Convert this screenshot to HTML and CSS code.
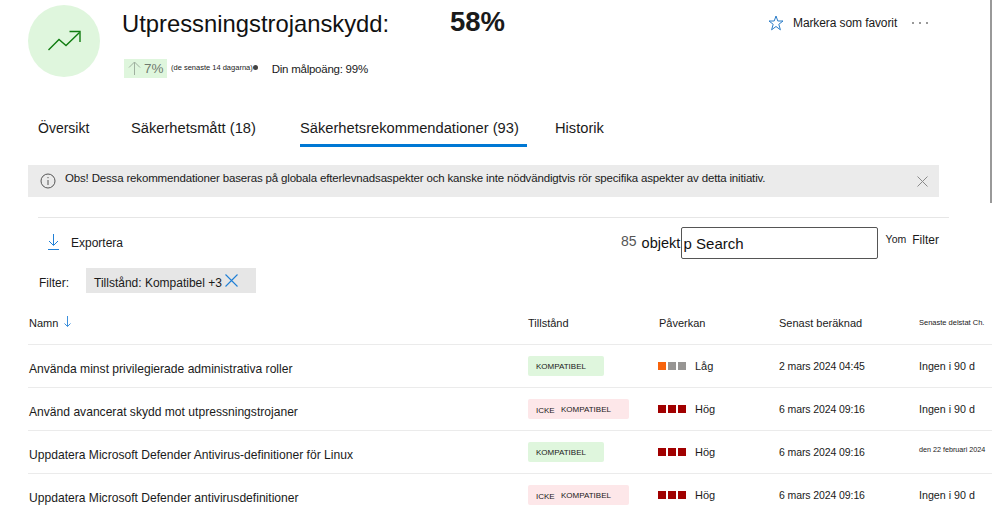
FILE: index.html
```html
<!DOCTYPE html>
<html lang="sv">
<head>
<meta charset="utf-8">
<title>Utpressningstrojanskydd</title>
<link rel="stylesheet" href="styles.css">
</head>
<body>
<div class="scrollbar"></div>
<header class="head">
  <div class="circle">
    <svg width="36" height="24" viewBox="0 0 36 24" fill="none" stroke="#107c10" stroke-width="1.4"><path d="M2.5 21 L13 10.500 L20 16.500 L33.500 3.500"/><path d="M23.500 2.500 H34 V13"/></svg>
  </div>
  <div class="head-main">
    <div class="title-row">
      <h1 class="title">Utpressningstrojanskydd:</h1>
      <div class="score">58%</div>
    </div>
    <div class="sub-row">
      <span class="delta"><svg width="13" height="14" viewBox="0 0 13 14" fill="none" stroke="#9fb09f" stroke-width="1"><path d="M6.500 14 V1 M1 6.500 L6.500 1 L12 6.500"/></svg>7%</span>
      <span class="period">(de senaste 14 dagarna)</span><span class="dot"></span>
      <span class="goal">Din målpoäng: 99%</span>
    </div>
  </div>
  <div class="fav">
    <svg width="16" height="16" viewBox="0 0 16 16" fill="none" stroke="#2b7cc7" stroke-width="1"><path d="M8 1 L9.800 6 H15 L10.800 9.300 L12.400 14.800 L8 11.500 L3.600 14.800 L5.200 9.300 L1 6 H6.200 Z"/></svg>
    <span class="fav-label">Markera som favorit</span>
    <span class="more"><i></i><i></i><i></i></span>
  </div>
</header>

<nav class="tabs">
  <a class="tab t1">Översikt</a>
  <a class="tab t2">Säkerhetsmått (18)</a>
  <a class="tab t3 active">Säkerhetsrekommendationer (93)</a>
  <a class="tab t4">Historik</a>
</nav>

<div class="info">
  <svg class="info-icon" width="16" height="16" viewBox="0 0 16 16" fill="none" stroke="#555"><circle cx="8" cy="8" r="7"/><path d="M8 7 V12 M8 4 V5.200"/></svg>
  <span class="info-text">Obs! Dessa rekommendationer baseras på globala efterlevnadsaspekter och kanske inte nödvändigtvis rör specifika aspekter av detta initiativ.</span>
  <svg class="info-close" width="11" height="11" viewBox="0 0 11 11" stroke="#8a8a8a" stroke-width="1"><path d="M0.500 0.500 L10.500 10.500 M10.500 0.500 L0.500 10.500"/></svg>
</div>

<div class="rule"></div>

<div class="toolbar">
  <div class="export">
    <svg width="11" height="16" viewBox="0 0 11 16" fill="none" stroke="#1f7fd6" stroke-width="1"><path d="M5.500 0 V11 M1 7 L5.500 11.500 L10 7"/><path d="M0 15.500 H11"/></svg>
    <span>Exportera</span>
  </div>
  <div class="tools-right">
    <span class="count-n">85</span>
    <span class="count-w">objekt</span>
    <div class="search">p Search</div>
    <span class="yom">Yom</span>
    <span class="filter-lbl">Filter</span>
  </div>
</div>

<div class="filters">
  <span class="filters-lbl">Filter:</span>
  <span class="chip"><span class="chip-text">Tillstånd: Kompatibel +3</span>
    <svg width="13" height="13" viewBox="0 0 13 13" stroke="#1f7fd6" stroke-width="1.100"><path d="M0.500 0.500 L12.500 12.500 M12.500 0.500 L0.500 12.500"/></svg>
  </span>
</div>

<section class="table">
  <div class="row row-head">
    <div class="c-name">Namn <svg class="sort" width="7" height="11" viewBox="0 0 7 11" fill="none" stroke="#3b8fdc"><path d="M3.500 0 V10.500 M0.500 7.500 L3.500 10.500 L6.500 7.500"/></svg></div>
    <div>Tillstånd</div>
    <div>Påverkan</div>
    <div>Senast beräknad</div>
    <div class="tiny">Senaste delstat Ch.</div>
  </div>
  <div class="row">
    <div class="c-name">Använda minst privilegierade administrativa roller</div>
    <div><span class="badge ok">KOMPATIBEL</span></div>
    <div class="impact"><i class="sq orange"></i><i class="sq grey"></i><i class="sq grey"></i><span>Låg</span></div>
    <div class="date">2 mars 2024 04:45</div>
    <div class="last">Ingen i 90 d</div>
  </div>
  <div class="row">
    <div class="c-name">Använd avancerat skydd mot utpressningstrojaner</div>
    <div><span class="badge bad"><b>ICKE</b>KOMPATIBEL</span></div>
    <div class="impact"><i class="sq red"></i><i class="sq red"></i><i class="sq red"></i><span>Hög</span></div>
    <div class="date">6 mars 2024 09:16</div>
    <div class="last">Ingen i 90 d</div>
  </div>
  <div class="row">
    <div class="c-name">Uppdatera Microsoft Defender Antivirus-definitioner för Linux</div>
    <div><span class="badge ok">KOMPATIBEL</span></div>
    <div class="impact"><i class="sq red"></i><i class="sq red"></i><i class="sq red"></i><span>Hög</span></div>
    <div class="date">6 mars 2024 09:16</div>
    <div class="last tiny-date">den 22 februari 2024</div>
  </div>
  <div class="row">
    <div class="c-name">Uppdatera Microsoft Defender antivirusdefinitioner</div>
    <div><span class="badge bad"><b>ICKE</b>KOMPATIBEL</span></div>
    <div class="impact"><i class="sq red"></i><i class="sq red"></i><i class="sq red"></i><span>Hög</span></div>
    <div class="date">6 mars 2024 09:16</div>
    <div class="last">Ingen i 90 d</div>
  </div>
</section>
</body>
</html>
```
FILE: styles.css
```css
html, body { margin: 0; padding: 0; height: 505px; overflow: hidden; background: #fff; }
body { font-family: "Liberation Sans", Arial, sans-serif; color: #1a1a1a; font-size: 12px; position: relative; }
svg { display: block; flex: none; }

.scrollbar { position: absolute; right: 0; top: 0; width: 2px; height: 203px; background: #999; }

.head { display: flex; height: 77px; padding: 5px 0 0 28px; }
.circle { width: 72px; height: 72px; border-radius: 50%; background: #dff6dd; display: flex; align-items: center; justify-content: center; flex: none; }
.head-main { margin-left: 22px; width: 600px; }
.title-row { display: flex; align-items: baseline; height: 52px; }
.title { margin: 0; font-size: 23.800px; font-weight: 400; line-height: 38px; width: 328px; color: #111; }
.score { font-size: 27.500px; font-weight: 700; line-height: 34px; color: #1a1a1a; position: relative; top: -1px; }
.sub-row { display: flex; align-items: center; height: 20px; margin-top: 1px; }
.delta { display: flex; align-items: center; gap: 3px; height: 19px; padding-left: 4px; box-sizing: border-box; margin-left: 2px; background: #dff6dd; color: #6f7a6f; font-size: 13.500px; width: 43px; }
.period { font-size: 7.500px; margin-left: 4px; position: relative; top: -1px; }
.dot { width: 5px; height: 5px; border-radius: 50%; background: #444; position: relative; top: -1px; }
.goal { font-size: 11.500px; letter-spacing: -0.25px; margin-left: 14px; position: relative; top: 1px; }
.fav { display: flex; align-items: center; height: 36px; margin-left: 46px; }
.fav-label { margin-left: 9px; font-size: 12px; letter-spacing: -0.1px; }
.more { display: flex; gap: 5px; margin-left: 15px; }
.more i { width: 2px; height: 2px; background: #777; border-radius: 50%; }

.tabs { display: flex; height: 65px; padding-left: 38px; box-sizing: border-box; padding-top: 37px; }
.tab { font-size: 14.700px; height: 28px; line-height: 18px; box-sizing: border-box; white-space: nowrap; }
.t1 { width: 93px; font-size: 14px; }
.t2 { width: 169px; }
.t3 { width: 227px; margin-right: 28px; }
.active { border-bottom: 3px solid #0078d4; padding-bottom: 3px; }

.info { display: flex; align-items: center; height: 32px; margin: 18px 53px 0 28px; padding-left: 12px; background: #ebebeb; }
.info-text { font-size: 11.500px; margin-left: 9px; position: relative; top: -3px; white-space: nowrap; letter-spacing: -0.165px; }
.info-close { margin-left: auto; margin-right: 11px; }

.rule { height: 1px; margin: 20px 43px 0 38px; background: #e6e6e6; }

.toolbar { display: flex; height: 50px; margin-left: 48px; }
.export { display: flex; align-items: center; gap: 12px; height: 48px; }
.export span { position: relative; top: 1px; }
.tools-right { display: flex; margin-left: 498px; align-items: flex-start; padding-top: 9px; height: 32px; }
.count-n { font-size: 14px; color: #555; line-height: 16px; margin-top: 6px; }
.count-w { font-size: 14.500px; margin-left: 5px; line-height: 18px; margin-top: 7px; width: 39px; color: #111; }
.search { width: 197px; height: 32px; border: 1px solid #555; border-radius: 2px; box-sizing: border-box; font-size: 15px; line-height: 32px; padding-left: 2px; color: #111; flex: none; }
.yom { font-size: 10.500px; margin-left: 8px; line-height: 12px; margin-top: 6px; }
.filter-lbl { font-size: 12px; margin-left: 6px; line-height: 14px; margin-top: 6px; }

.filters { display: flex; align-items: center; height: 25px; margin-left: 39px; }
.filters-lbl { width: 47px; position: relative; top: 2px; }
.chip { display: flex; align-items: center; gap: 3px; height: 25px; width: 170px; box-sizing: border-box; padding-left: 8px; background: #e6e6e6; font-size: 12px; white-space: nowrap; }
.chip-text { position: relative; top: 2px; }

.table { margin: 10px 0 0 28px; }
.row { display: grid; grid-template-columns: 500px 131px 120px 140px 73px; align-items: center; height: 43px; border-top: 1px solid #ebebeb; box-sizing: border-box; font-size: 11px; white-space: nowrap; }
.row-head { border-top: 0; height: 41px; position: relative; }
.row-head > div { position: relative; top: -1px; }
.c-name { padding-left: 1px; display: flex; align-items: center; gap: 6px; }
.row:not(.row-head) .c-name { font-size: 12.100px; position: relative; top: 3px; }
.sort { position: relative; top: -1px; }
.badge { display: inline-flex; align-items: center; height: 20px; border-radius: 2px; padding-left: 8px; font-size: 8px; box-sizing: border-box; }
.ok { width: 76px; background: #dff6dd; }
.bad { width: 101px; background: #fde7e9; }
.bad b { font-weight: 400; width: 25px; position: relative; top: 1px; }
.impact { display: flex; align-items: center; gap: 2px; margin-left: -1px; }
.sq { width: 8px; height: 8px; }
.orange { background: #f7630c; }
.grey { background: #979593; }
.red { background: #a10000; }
.impact span { margin-left: 7px; }
.date { font-size: 10.500px; letter-spacing: -0.1px; }
.last { font-size: 10.700px; }
.tiny { font-size: 7.500px; }
.last.tiny-date { font-size: 7.200px; position: relative; top: -3px; }
```
